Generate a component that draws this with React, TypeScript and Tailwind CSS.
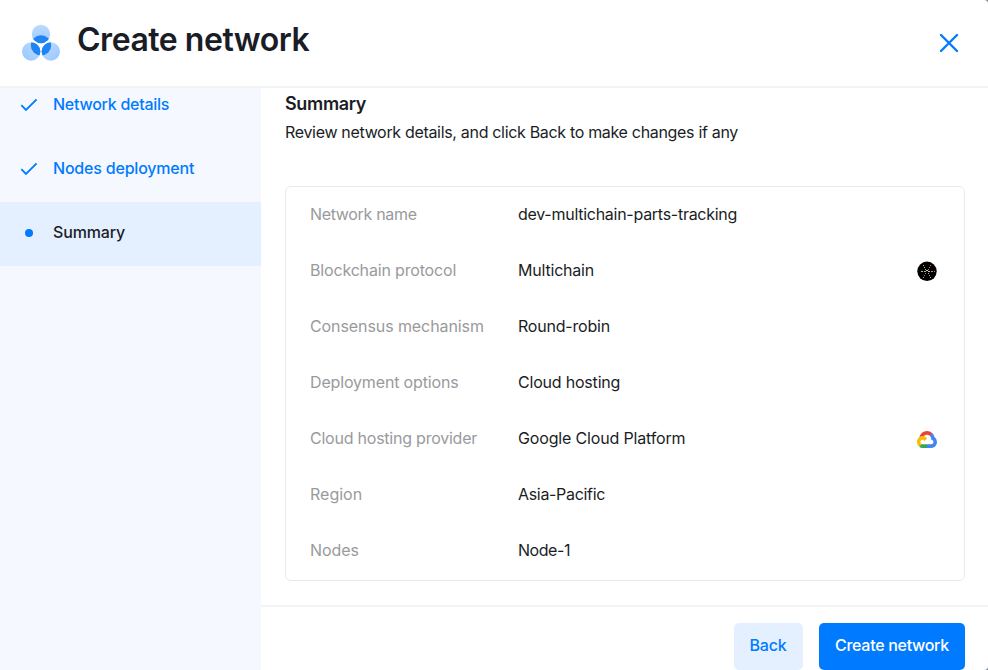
import React from "react";

function Logo() {
  return (
    <svg width="40" height="40" viewBox="0 0 40 40" className="shrink-0">
      <defs>
        <linearGradient id="lobe" x1="1" y1="0" x2="0" y2="1">
          <stop offset="0" stopColor="#C4DEFF" />
          <stop offset="1" stopColor="#96C6FF" />
        </linearGradient>
        <linearGradient id="lobeRight" x1="0" y1="0" x2="1" y2="1">
          <stop offset="0" stopColor="#C4DEFF" />
          <stop offset="1" stopColor="#96C6FF" />
        </linearGradient>
        <linearGradient id="lobeTop" x1="0" y1="0" x2="0" y2="1">
          <stop offset="0" stopColor="#BBDBFF" />
          <stop offset="1" stopColor="#9BC9FF" />
        </linearGradient>
        <clipPath id="clipTop"><circle cx="20" cy="12" r="9.2" /></clipPath>
        <clipPath id="clipLeft"><circle cx="10.2" cy="29.5" r="9.2" /></clipPath>
        <clipPath id="clipRight"><circle cx="29.8" cy="29.5" r="9.2" /></clipPath>
      </defs>
      <circle cx="20" cy="12" r="9.2" fill="url(#lobeTop)" />
      <circle cx="10.2" cy="29.5" r="9.2" fill="url(#lobe)" />
      <circle cx="29.8" cy="29.5" r="9.2" fill="url(#lobeRight)" />
      <circle cx="20" cy="23.4" r="10.2" fill="#1F85F5" clipPath="url(#clipTop)" />
      <circle cx="20" cy="23.4" r="10.2" fill="#1F85F5" clipPath="url(#clipLeft)" />
      <circle cx="20" cy="23.4" r="10.2" fill="#1F85F5" clipPath="url(#clipRight)" />
    </svg>
  );
}

function Close() {
  return (
    <svg width="20" height="20" viewBox="0 0 20 20" fill="none" stroke="#007BFF" strokeWidth="2.4" strokeLinecap="round">
      <path d="M2 2L18 18M18 2L2 18" />
    </svg>
  );
}

function Check() {
  return (
    <svg width="18" height="14" viewBox="0 0 18 14" fill="none" stroke="#007BFF" strokeWidth="1.8">
      <path d="M1.3 7.2L6 12L16.6 1.3" />
    </svg>
  );
}

function MultichainIcon() {
  return (
    <svg width="20" height="20" viewBox="0 0 20 20">
      <circle cx="10" cy="10.3" r="9.7" fill="#000" />
      <g shapeRendering="crispEdges">
        <path d="M4 10h2v1H4zM7 10h2v1H7z" fill="#7FCFA0" />
        <path d="M11 10h2v1h-2z" fill="#B7C9B0" />
        <path d="M14 10h2v1h-2zM17 10h1v1h-1z" fill="#D8788C" />
        <path d="M6 4h1v1H6zM7 6h1v1H7zM8 8h1v1H8z" fill="#D6B45C" />
        <path d="M13 4h1v1h-1zM12 6h1v1h-1zM11 8h1v1h-1z" fill="#E0655F" />
        <path d="M8 12h1v1H8zM7 14h1v1H7zM6 16h1v1H6z" fill="#5F8FC4" />
        <path d="M11 12h1v1h-1zM12 14h1v1h-1zM13 16h1v1h-1z" fill="#8DA5D8" />
        <path d="M9 9h2v1H9z" fill="#D6C98C" />
      </g>
    </svg>
  );
}

function GoogleCloudIcon() {
  return (
    <svg width="20" height="17" viewBox="0 0 256 206" preserveAspectRatio="none">
      <path fill="#EA4335" d="M170.25 56.82l22.25-22.25 1.48-9.37C153.44-11.68 88.98-7.5 52.42 33.92 42.27 45.42 34.74 59.76 30.72 74.57l7.97-1.12 44.5-7.34 3.44-3.51c19.8-21.75 53.27-24.67 76.13-6.17z" />
      <path fill="#4285F4" d="M224.2 73.92a100.25 100.25 0 0 0-30.21-48.72l-31.23 31.23a55.5 55.5 0 0 1 20.38 44.04v5.54c15.35 0 27.8 12.45 27.8 27.8 0 15.35-12.45 27.57-27.8 27.57h-55.67l-5.47 5.94v33.34l5.47 5.24h55.67c39.93.31 72.55-31.49 72.86-71.42a72.3 72.3 0 0 0-31.8-60.56" />
      <path fill="#34A853" d="M71.87 205.8h55.59v-44.51H71.87a27.3 27.3 0 0 1-11.47-2.5l-7.89 2.42-22.41 22.25-1.95 7.57a71.97 71.97 0 0 0 43.72 14.77" />
      <path fill="#FBBC05" d="M71.87 61.43C31.94 61.66-.24 94.22 0 134.15a72.3 72.3 0 0 0 28.15 56.88l32.25-32.25c-13.99-6.32-20.21-22.79-13.89-36.78 6.32-13.99 22.79-20.21 36.78-13.89a27.8 27.8 0 0 1 13.89 13.89l32.25-32.25a72.24 72.24 0 0 0-57.56-28.32" />
    </svg>
  );
}

const rows = [
  { label: "Network name", labelClass: "tracking-[-0.33px]", value: "dev-multichain-parts-tracking", valueClass: "tracking-[-0.27px]" },
  { label: "Blockchain protocol", labelClass: "tracking-[-0.17px]", value: "Multichain", valueClass: "tracking-[-0.2px]", icon: <MultichainIcon /> },
  { label: "Consensus mechanism", labelClass: "tracking-[-0.09px]", value: "Round-robin", valueClass: "tracking-[-0.2px]" },
  { label: "Deployment options", labelClass: "tracking-[-0.16px]", value: "Cloud hosting", valueClass: "tracking-[-0.2px]" },
  { label: "Cloud hosting provider", labelClass: "tracking-[-0.23px]", value: "Google Cloud Platform", valueClass: "tracking-[-0.16px]", icon: <GoogleCloudIcon /> },
  { label: "Region", labelClass: "tracking-[0px]", value: "Asia-Pacific", valueClass: "tracking-[-0.32px]" },
  { label: "Nodes", labelClass: "tracking-[-0.05px]", value: "Node-1", valueClass: "tracking-[-0.45px]" },
];

export default function App() {
  return (
    <div className="h-[670px] w-[988px] overflow-hidden bg-[#7C8796]">
      <div className="flex h-full flex-col overflow-hidden rounded-r-[4px] bg-white font-['Inter',sans-serif] text-base leading-6 tracking-[-0.3px] text-[#1A1D26]">
        <header className="flex h-[88px] shrink-0 items-start border-b-2 border-[#F2F3F4] pl-[21px]">
          <div className="mt-[22px] flex h-10 items-center"><Logo /></div>
          <h1 className="mt-5 ml-4 text-[32px] leading-10 font-semibold tracking-[-0.47px]">Create network</h1>
          <button className="mt-[33px] mr-[29px] ml-auto"><Close /></button>
        </header>
        <div className="flex min-h-0 flex-1">
          <nav className="w-[261px] shrink-0 bg-[#F5F9FF] font-medium text-[#007BFF]">
            <div className="flex h-[49px] pt-1 pl-5">
              <span className="mt-1.5 w-[33px]"><Check /></span>
              <span className="tracking-[-0.26px]">Network details</span>
            </div>
            <div className="flex h-[64.5px] pt-[19px] pl-5">
              <span className="mt-1.5 w-[33px]"><Check /></span>
              <span className="tracking-[-0.2px]">Nodes deployment</span>
            </div>
            <div className="flex h-16 items-start bg-[#E4F0FF] pt-[18.5px] pl-[25px] text-[#1A1D26]">
              <span className="mt-[9px] mr-5 size-2 rounded-full bg-[#007BFF]" />
              <span className="tracking-[-0.15px]">Summary</span>
            </div>
          </nav>
          <main className="flex min-w-0 flex-1 flex-col">
            <section className="h-[517px] shrink-0 pt-1 pr-[23px] pl-6">
              <h2 className="text-[18px] leading-6 font-semibold tracking-[-0.35px]">Summary</h2>
              <p className="mt-1 leading-6 tracking-[-0.32px]">Review network details, and click Back to make changes if any</p>
              <div className="mt-[42px] h-[395px] rounded-md border border-[#E9EAEB]">
                {rows.map((row) => (
                  <div key={row.label} className="flex h-14 items-center pr-[27px] pb-0.5 pl-6">
                    <span className={`w-52 text-[#999A9C] ${row.labelClass}`}>{row.label}</span>
                    <span className={row.valueClass}>{row.value}</span>
                    {row.icon && <span className="mt-0.5 ml-auto">{row.icon}</span>}
                  </div>
                ))}
              </div>
            </section>
            <footer className="flex flex-1 items-start justify-end gap-4 border-t-2 border-[#F2F3F4] pt-4 pr-[23px] font-medium">
              <button className="h-[47px] w-[69px] rounded-[5px] bg-[#E4F0FF] pr-px pb-1 tracking-[-0.2px] text-[#007BFF]">Back</button>
              <button className="h-[47px] w-[146px] rounded-[5px] bg-[#007BFF] pb-1 text-white">Create network</button>
            </footer>
          </main>
        </div>
      </div>
    </div>
  );
}
